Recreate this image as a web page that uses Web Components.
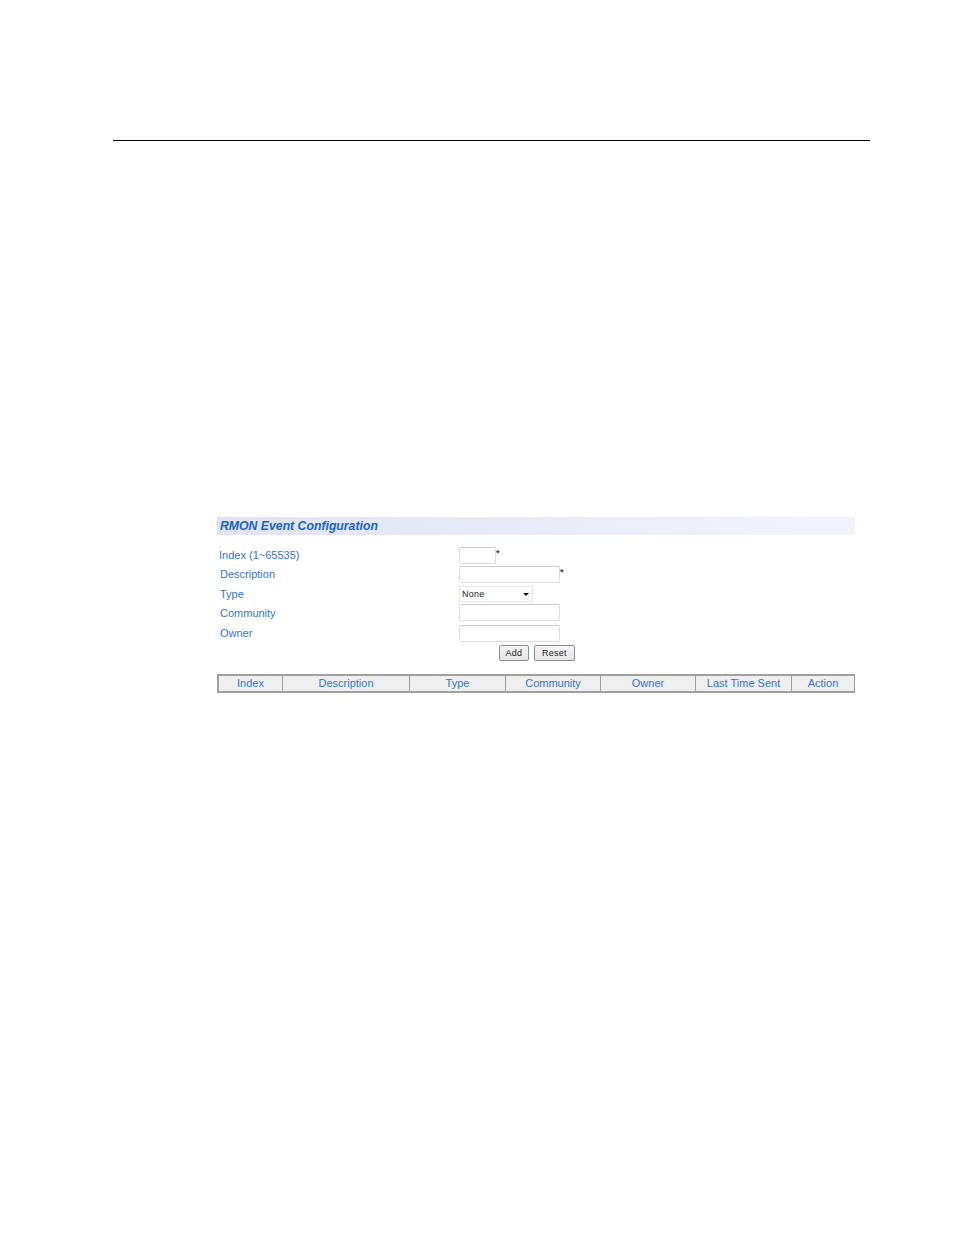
<!DOCTYPE html>
<html><head><meta charset="utf-8"><style>
html,body{margin:0;padding:0;background:#fff;}
body{width:954px;height:1235px;overflow:hidden;font-family:"Liberation Sans",Arial,sans-serif;}
</style></head><body>
<doc-page>
  <rmon-panel></rmon-panel>
</doc-page>
<script>
function def(name,html,init){
  customElements.define(name,class extends HTMLElement{
    constructor(){super();this.attachShadow({mode:'open'}).innerHTML=html;}
    connectedCallback(){if(init)init(this);}
  });
}
def('doc-page',`<style>
:host{display:block;padding:140px 84px 0 113px;}
.rule{height:1px;background:#000;}
.body{padding:376px 15px 0 104px;}
</style><div class="rule"></div><div class="body"><slot></slot></div>`);

def('form-row',`<style>
:host{display:grid;grid-template-columns:242px 1fr;align-items:start;height:var(--h,20px);
font:11px/14px "Liberation Sans",Arial,sans-serif;color:#3274d4;}
.l{padding:var(--lt,1px) 0 0 var(--ll,3px);white-space:nowrap;}
.c{display:flex;align-items:flex-start;padding-top:var(--ct,0);}
</style><div class="l"><slot name="label"></slot></div><div class="c"><slot></slot></div>`);

def('text-box',`<style>
:host{display:block;box-sizing:border-box;height:17px;width:var(--w,101px);border:1px solid #dcdcdc;border-top-color:#cccccc;border-radius:2px;background:#fff;}
</style>`);

def('req-star',`<style>
:host{display:block;font:bold 9px/10px "Liberation Sans",Arial,sans-serif;color:#33425c;height:10px;margin-top:1px;}
</style>*`);

def('select-box',`<style>
:host{display:flex;box-sizing:border-box;align-items:center;justify-content:space-between;height:16px;width:74px;border:1px solid #e6e6e6;background:#fff;
font:9px/14px "Liberation Sans",Arial,sans-serif;letter-spacing:.25px;color:#222;padding:0 2px 0 2px;}
svg{display:block;margin-right:1px;}
</style><span><slot></slot></span><svg width="6" height="3" viewBox="0 0 6 3"><path d="M0 0h6L3 3z" fill="#111"/></svg>`);

def('push-btn',`<style>
:host{display:flex;box-sizing:border-box;align-items:center;justify-content:center;height:16px;border:1px solid #8d8d8d;border-radius:2px;
background:linear-gradient(#f6f6f6,#e4e4e4);font:9px/14px "Liberation Sans",Arial,sans-serif;letter-spacing:.25px;color:#222;}
</style><slot></slot>`);

def('rmon-panel',`<style>
:host{display:block;width:638px;}
h2{margin:0;height:18px;box-sizing:border-box;padding-left:3px;
background:linear-gradient(90deg,#dfe3f4,#f3f4fb);
font:italic bold 12.250px/18px "Liberation Sans",Arial,sans-serif;color:#1c63c4;}
.form{padding-top:12px;}
.btns{display:flex;gap:5px;padding-left:282px;}
.add{width:30px}.reset{width:41px}
table{border-collapse:separate;border-spacing:0;table-layout:fixed;width:638px;margin-top:13px;height:19px;
border:2px solid #a0a0a0;border-width:2px 1px 2px 2px;box-sizing:border-box;background:#efefef;}
th{padding:0;font:normal 11px/15px "Liberation Sans",Arial,sans-serif;color:#3274d4;border-left:1px solid #a0a0a0;}
th:first-child{border-left:0;}
</style>
<h2>RMON Event Configuration</h2>
<div class="form">
<form-row style="--h:19px;--lt:1px;--ll:2px"><span slot="label">Index (1~65535)</span><text-box style="--w:37px"></text-box><req-star></req-star></form-row>
<form-row style="--h:20px;--lt:1px"><span slot="label">Description</span><text-box></text-box><req-star></req-star></form-row>
<form-row style="--h:18px;--lt:1px"><span slot="label">Type</span><select-box>None</select-box></form-row>
<form-row style="--h:21px;--lt:2px"><span slot="label">Community</span><text-box></text-box></form-row>
<form-row style="--h:20px;--lt:1px"><span slot="label">Owner</span><text-box></text-box></form-row>
<div class="btns"><push-btn class="add">Add</push-btn><push-btn class="reset">Reset</push-btn></div>
</div>
<table><colgroup><col style="width:63px"><col style="width:127px"><col style="width:96px"><col style="width:95px"><col style="width:95px"><col style="width:96px"><col></colgroup>
<thead><tr><th>Index</th><th>Description</th><th>Type</th><th>Community</th><th>Owner</th><th>Last Time Sent</th><th>Action</th></tr></thead></table>`);
</script>
</body></html>
